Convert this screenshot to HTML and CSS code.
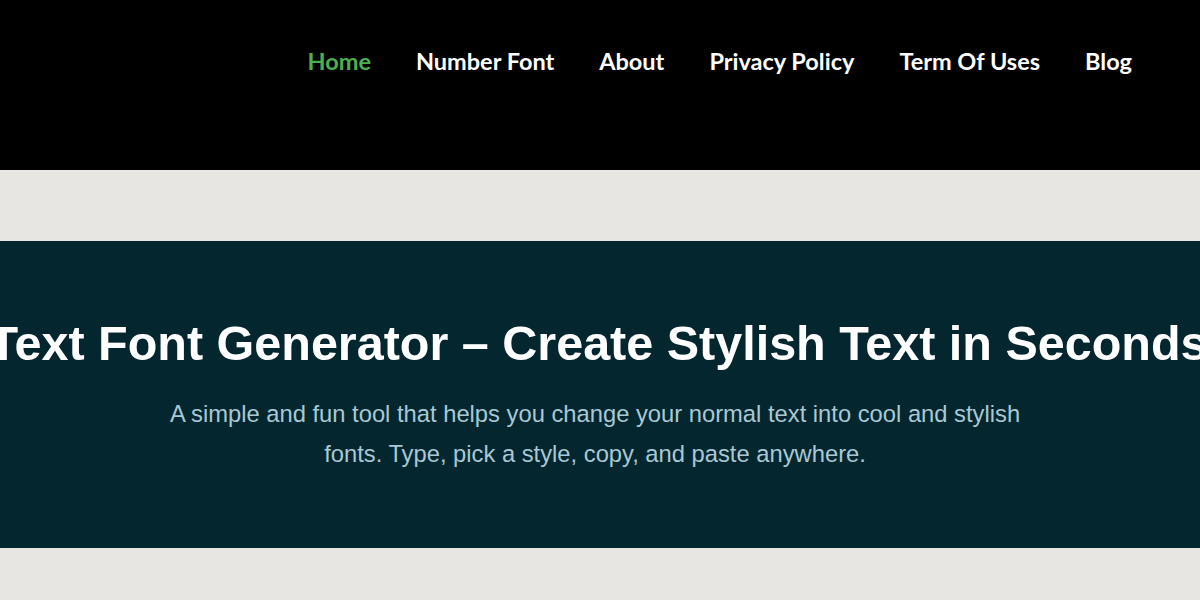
FILE: index.html
```html
<!DOCTYPE html>
<html lang="en">

<head>
  <meta charset="utf-8">
  <title>Text Font Generator</title>
  <link rel="stylesheet" href="styles.css">
</head>

<body>
  <header class="site-header">
    <nav class="menu">
      <a class="menu-link active" href="#">Home</a>
      <a class="menu-link" href="#">Number Font</a>
      <a class="menu-link" href="#">About</a>
      <a class="menu-link" href="#">Privacy Policy</a>
      <a class="menu-link" href="#">Term Of Uses</a>
      <a class="menu-link" href="#">Blog</a>
    </nav>
  </header>

  <div class="spacer"></div>

  <section class="hero">
    <div class="hero-title-wrap">
      <h1 class="hero-title">Text Font Generator &ndash; Create Stylish Text in Seconds</h1>
    </div>
    <p class="hero-text">A simple and fun tool that helps you change your normal text into cool and stylish fonts. Type, pick a style, copy, and paste anywhere.</p>
  </section>
</body>

</html>
```

FILE: styles.css
```css
* {
  box-sizing: border-box;
}

body {
  margin: 0;
  background: #e8e6e2;
  font-family: "Liberation Sans", Arial, sans-serif;
}

/* top bar */
.site-header {
  height: 170px;
  background: #000;
  padding: 46px 68px 0 0;
}

.menu {
  display: flex;
  justify-content: flex-end;
  gap: 45px;
}

.menu-link {
  font-family: "Lato", sans-serif;
  font-weight: 700;
  font-size: 23.5px;
  line-height: 30px;
  color: #fff;
  text-decoration: none;
}

.menu-link.active {
  color: #4caf50;
}

.spacer {
  height: 71px;
}

/* hero block */
.hero {
  background: #03262f;
  height: 307px;
  padding: 73px 10px 0 0;
  overflow: hidden;
}

.hero-title-wrap {
  display: flex;
  justify-content: center;
  margin-right: -6px;
}

.hero-title {
  margin: 0;
  flex: none;
  white-space: nowrap;
  font-size: 48.5px;
  line-height: 58px;
  font-weight: 700;
  color: #fff;
}

.hero-text {
  max-width: 880px;
  margin: 22px auto 0;
  text-align: center;
  font-size: 23.75px;
  line-height: 40px;
  color: #a8c8d4;
}
```
